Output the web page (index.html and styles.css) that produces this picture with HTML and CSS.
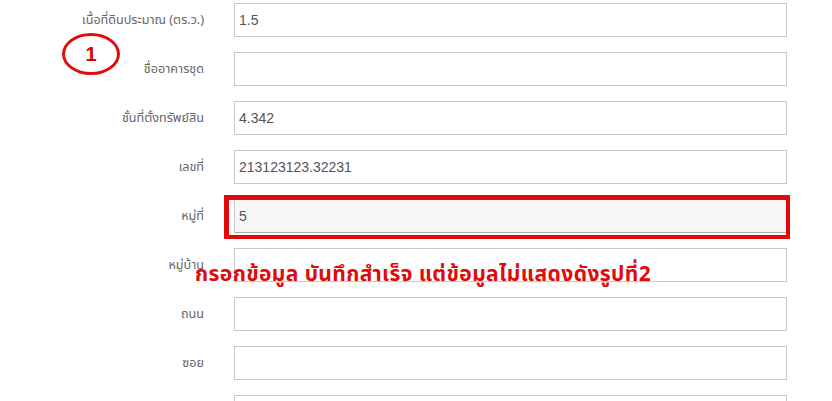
FILE: index.html
```html
<!DOCTYPE html>
<html lang="th">
<head>
<meta charset="utf-8">
<title>ฟอร์มข้อมูลทรัพย์สิน</title>
<link rel="stylesheet" href="styles.css">
</head>
<body>
<div class="page">
  <form class="form">
    <label class="lbl">เนื้อที่ดินประมาณ (ตร.ว.)</label>
    <div class="field">1.5</div>
    <label class="lbl">ชื่ออาคารชุด</label>
    <div class="field"></div>
    <label class="lbl">ชั้นที่ตั้งทรัพย์สิน</label>
    <div class="field">4.342</div>
    <label class="lbl">เลขที่</label>
    <div class="field">213123123.32231</div>
    <label class="lbl">หมู่ที่</label>
    <div class="field readonly">5</div>
    <label class="lbl">หมู่บ้าน</label>
    <div class="field"></div>
    <label class="lbl">ถนน</label>
    <div class="field"></div>
    <label class="lbl">ซอย</label>
    <div class="field"></div>
    <label class="lbl"></label>
    <div class="field"></div>
  </form>
  <div class="circle">1</div>
  <div class="highlight"></div>
  <div class="note">กรอกข้อมูล บันทึกสำเร็จ แต่ข้อมูลไม่แสดงดังรูปที่2</div>
</div>
</body>
</html>
```
FILE: styles.css
```css
html, body {
  margin: 0;
  padding: 0;
  background: #fff;
  overflow: hidden;
}
.page {
  position: relative;
  width: 832px;
  height: 401px;
  overflow: hidden;
  font-family: Tahoma, "Noto Sans Thai", "Liberation Sans", "DejaVu Sans", sans-serif;
}
.form {
  display: grid;
  grid-template-columns: 204px 553px;
  column-gap: 30px;
  row-gap: 15px;
  padding-top: 3px;
  margin: 0;
}
.lbl {
  font-size: 12.6px;
  color: #666;
  text-align: right;
  align-self: center;
  padding-top: 1px;
}
.field {
  box-sizing: border-box;
  height: 34px;
  border: 1px solid #c8c8c8;
  background: #fff;
  font-family: "Liberation Sans", Arial, sans-serif;
  font-size: 14px;
  color: #555;
  padding: 0 4px;
  line-height: 32px;
}
.field.readonly {
  background: #f6f6f6;
  border-bottom-color: #aaa;
}
.circle {
  position: absolute;
  left: 62px;
  top: 33px;
  width: 58px;
  height: 42px;
  box-sizing: border-box;
  border: 3px solid #e30a0a;
  border-radius: 50%;
  color: #d80000;
  font-family: "Liberation Sans", Arial, sans-serif;
  font-weight: bold;
  font-size: 20px;
  display: flex;
  align-items: center;
  justify-content: center;
}
.highlight {
  position: absolute;
  left: 224px;
  top: 195px;
  width: 566px;
  height: 44px;
  box-sizing: border-box;
  border: 4px solid #e00a0a;
  border-left-width: 5px;
  border-top-width: 5px;
}
.note {
  position: absolute;
  left: 195px;
  top: 259px;
  color: #e00a0a;
  font-weight: bold;
  font-size: 21px;
  letter-spacing: 0.4px;
  white-space: nowrap;
}
```
